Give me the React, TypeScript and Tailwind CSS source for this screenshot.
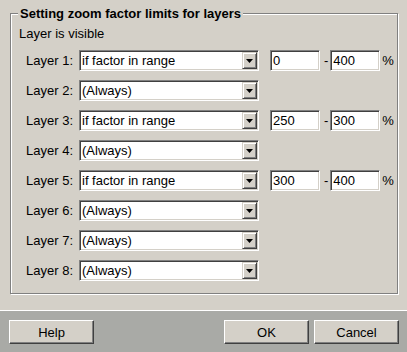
import React from "react";

type Row = { n: number; v: string; a?: string; b?: string };

const rows: Row[] = [
  { n: 1, v: "if factor in range", a: "0", b: "400" },
  { n: 2, v: "(Always)" },
  { n: 3, v: "if factor in range", a: "250", b: "300" },
  { n: 4, v: "(Always)" },
  { n: 5, v: "if factor in range", a: "300", b: "400" },
  { n: 6, v: "(Always)" },
  { n: 7, v: "(Always)" },
  { n: 8, v: "(Always)" },
];

const sunken =
  "border border-t-[#808080] border-l-[#808080] border-r-white border-b-white shadow-[inset_1px_1px_0_#404040,inset_-1px_-1px_0_#d4d0c8] bg-white";

function Combo({ value }: { value: string }) {
  return (
    <div className={`ml-[6px] w-[180px] h-[21px] p-[1px] flex ${sunken}`}>
      <span className="flex-1 pl-[1px] self-center whitespace-nowrap">{value}</span>
      <div className="w-[15px] h-full bg-[#d4d0c8] border border-t-[#d4d0c8] border-l-[#d4d0c8] border-r-[#404040] border-b-[#404040] shadow-[inset_1px_1px_0_#fff,inset_-1px_-1px_0_#808080] flex items-center justify-center">
        <svg width="7" height="4" viewBox="0 0 7 4">
          <path d="M0 0H7L3.5 4Z" fill="#000" />
        </svg>
      </div>
    </div>
  );
}

function Field({ value, className = "" }: { value: string; className?: string }) {
  return (
    <div className={`w-[50px] h-[21px] p-[1px] flex items-center ${sunken} ${className}`}>
      <span className="pl-[1px]">{value}</span>
    </div>
  );
}

function Btn({ label, className = "" }: { label: string; className?: string }) {
  return (
    <div
      className={`w-[85px] h-[24px] bg-[#d4d0c8] border border-t-white border-l-white border-r-[#404040] border-b-[#404040] shadow-[inset_-1px_-1px_0_#808080] flex items-center justify-center ${className}`}
    >
      {label}
    </div>
  );
}

export default function App() {
  return (
    <div className="w-[407px] h-[352px] bg-[#d4d0c8] flex flex-col font-['Liberation_Sans',Arial,sans-serif] text-[13px] leading-[15px] text-black">
      <div className="flex-1 pt-[13px] pl-[10px]">
        <div className="relative w-[388px] border border-[#808080] shadow-[inset_1px_1px_0_#fff,1px_1px_0_#fff] pt-[12px] pb-[12px] pl-[8px]">
          <span className="absolute left-[7px] top-[-8px] bg-[#d4d0c8] px-[2px] font-bold whitespace-nowrap">
            Setting zoom factor limits for layers
          </span>
          <div>Layer is visible</div>
          <div className="mt-[9px] flex flex-col gap-[9px]">
            {rows.map((r) => (
              <div key={r.n} className="flex items-center h-[21px]">
                <span className="w-[54px] text-right whitespace-nowrap">Layer {r.n}:</span>
                <Combo value={r.v} />
                {r.a !== undefined && (
                  <>
                    <Field value={r.a} className="ml-[11px]" />
                    <span className="ml-[4px] mr-[2px]">-</span>
                    <Field value={r.b ?? ""} />
                    <span className="ml-[2px]">%</span>
                  </>
                )}
              </div>
            ))}
          </div>
        </div>
      </div>
      <div className="h-[42px] border-t border-white bg-[#a9aaa6] flex items-start pt-[9px]">
        <Btn label="Help" className="ml-[9px]" />
        <Btn label="OK" className="ml-auto" />
        <Btn label="Cancel" className="ml-[5px] mr-[8px]" />
      </div>
    </div>
  );
}
